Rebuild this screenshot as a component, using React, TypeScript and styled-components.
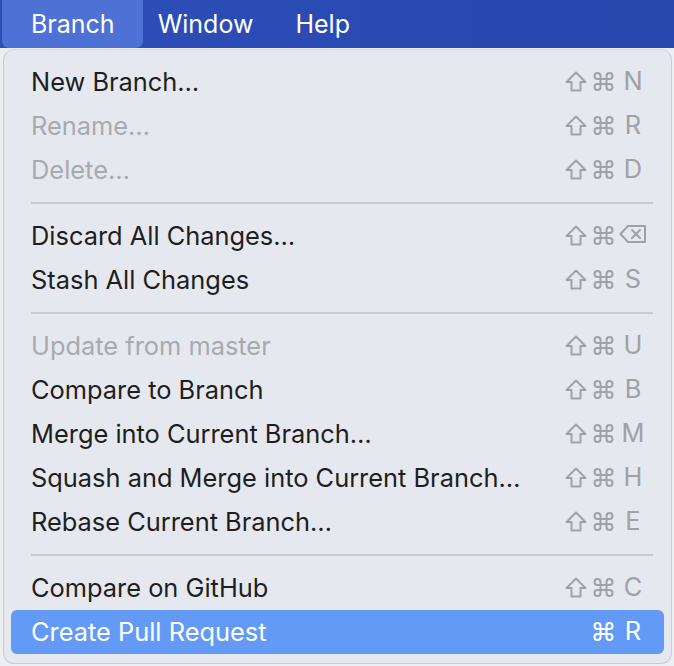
import React from "react";
import styled, { createGlobalStyle } from "styled-components";

const Global = createGlobalStyle`
  html, body { margin: 0; padding: 0; background: #eceef2; }
  body { font-family: Inter, "Liberation Sans", sans-serif; -webkit-font-smoothing: antialiased; }
`;

const Screen = styled.div`
  width: 674px;
  height: 666px;
  overflow: hidden;
  background: #eceef2;
`;

const MenuBar = styled.div`
  height: 48px;
  display: flex;
  align-items: stretch;
  padding-left: 2px;
  background: linear-gradient(90deg, #2c4fb8 0%, #2a4ab2 60%, #2848ae 100%);
`;

const BarItem = styled.div<{ $active?: boolean }>`
  display: flex;
  align-items: center;
  padding-left: ${(p) => (p.$active ? "29px" : "21px")};
  padding-right: ${(p) => (p.$active ? "28px" : "21px")};
  margin-right: ${(p) => (p.$active ? "-6px" : "0")};
  font-size: 25px;
  color: #ffffff;
  border-radius: 0 0 7px 7px;
  background: ${(p) => (p.$active ? "#4e71d6" : "transparent")};
`;

const Menu = styled.div`
  margin: 1px 0 0 3px;
  width: 669px;
  box-sizing: border-box;
  padding: 10px 7px 9px;
  background: #e6e8ef;
  border: 1px solid rgba(0, 0, 0, 0.12);
  border-top-color: rgba(0, 0, 0, 0.06);
  border-radius: 11px;
  display: flex;
  flex-direction: column;
`;

const Row = styled.div<{ $disabled?: boolean; $selected?: boolean }>`
  height: 44px;
  box-sizing: border-box;
  display: flex;
  align-items: center;
  justify-content: space-between;
  padding: 0 17px 2px 20px;
  border-radius: 6px;
  font-size: 25.4px;
  color: ${(p) => (p.$selected ? "#ffffff" : p.$disabled ? "#a8aab0" : "#1e1e20")};
  background: ${(p) => (p.$selected ? "#639af6" : "transparent")};
`;

const Label = styled.span`
  white-space: nowrap;
`;

const Shortcut = styled.div<{ $selected?: boolean }>`
  display: grid;
  grid-template-columns: 22px 22px 28px;
  column-gap: 5px;
  align-items: center;
  justify-items: center;
  color: ${(p) => (p.$selected ? "#ffffff" : "#9fa1a7")};
`;

const Slot = styled.span`
  display: flex;
  align-items: center;
  justify-content: center;
  height: 22px;
`;

const Key = styled.span`
  font-size: 25.4px;
  line-height: 1;
`;

const Separator = styled.div`
  height: 2px;
  margin: 10px 11px 10px 20px;
  background: #c9cbd2;
`;

const ShiftIcon = () => (
  <svg width="22" height="21" viewBox="0 0 22 21" fill="none" stroke="currentColor" strokeWidth="1.9" strokeLinejoin="round">
    <path d="M11 1.5 L20.5 11 H15.5 V19.5 H6.5 V11 H1.5 Z" />
  </svg>
);

const CmdIcon = () => (
  <svg width="21" height="21" viewBox="0 0 21 21" fill="none" stroke="currentColor" strokeWidth="2">
    <path d="M7.5 7.5 V5 A3 3 0 1 0 4.5 8 H16.5 A3 3 0 1 0 13.5 5 V16 A3 3 0 1 0 16.5 13 H4.5 A3 3 0 1 0 7.5 16 Z" />
  </svg>
);

const DeleteIcon = () => (
  <svg width="28" height="20" viewBox="0 0 28 20" fill="none" stroke="currentColor" strokeWidth="2">
    <path d="M9 2 H26 V18 H9 L1.5 10 Z" strokeLinejoin="round" />
    <path d="M13 6 L21 14 M21 6 L13 14" strokeLinecap="round" />
  </svg>
);

type Item =
  | { sep: true }
  | { sep?: false; label: string; shift?: boolean; key: React.ReactNode; disabled?: boolean; selected?: boolean };

const items: Item[] = [
  { label: "New Branch…", shift: true, key: "N" },
  { label: "Rename…", shift: true, key: "R", disabled: true },
  { label: "Delete…", shift: true, key: "D", disabled: true },
  { sep: true },
  { label: "Discard All Changes…", shift: true, key: <DeleteIcon /> },
  { label: "Stash All Changes", shift: true, key: "S" },
  { sep: true },
  { label: "Update from master", shift: true, key: "U", disabled: true },
  { label: "Compare to Branch", shift: true, key: "B" },
  { label: "Merge into Current Branch…", shift: true, key: "M" },
  { label: "Squash and Merge into Current Branch…", shift: true, key: "H" },
  { label: "Rebase Current Branch…", shift: true, key: "E" },
  { sep: true },
  { label: "Compare on GitHub", shift: true, key: "C" },
  { label: "Create Pull Request", key: "R", selected: true },
];

export default function App() {
  return (
    <Screen>
      <Global />
      <MenuBar>
        <BarItem $active>Branch</BarItem>
        <BarItem>Window</BarItem>
        <BarItem>Help</BarItem>
      </MenuBar>
      <Menu>
        {items.map((it, i) =>
          it.sep ? (
            <Separator key={i} />
          ) : (
            <Row key={i} $disabled={it.disabled} $selected={it.selected}>
              <Label>{it.label}</Label>
              <Shortcut $selected={it.selected}>
                <Slot>{it.shift ? <ShiftIcon /> : null}</Slot>
                <Slot>
                  <CmdIcon />
                </Slot>
                <Key>{it.key}</Key>
              </Shortcut>
            </Row>
          )
        )}
      </Menu>
    </Screen>
  );
}
